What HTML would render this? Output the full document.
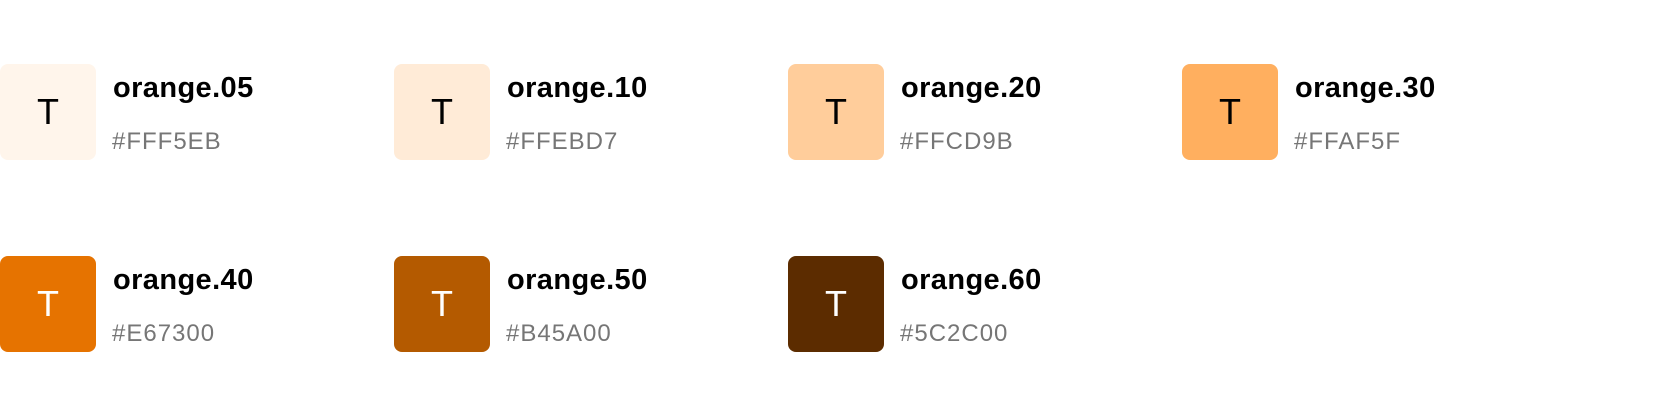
<!DOCTYPE html>
<html><head><style>
body{margin:0;width:1680px;height:416px;background:#fff;font-family:"Liberation Sans",sans-serif;position:relative;overflow:hidden}
.c{position:absolute;width:394px;height:96px}
.s{position:absolute;left:0;top:0;width:96px;height:96px;border-radius:8px;display:flex;align-items:center;justify-content:center;font-size:36px;line-height:1}
.t{position:absolute;left:113px;top:8px;font-size:29px;font-weight:bold;color:#000;white-space:nowrap;letter-spacing:0.4px}
.h{position:absolute;left:112px;top:64px;font-size:24px;color:#767676;white-space:nowrap;letter-spacing:1px}
</style></head><body>
<div class="c" style="left:0;top:64px"><div class="s" style="background:#FFF5EB">T</div><div class="t">orange.05</div><div class="h">#FFF5EB</div></div>
<div class="c" style="left:394px;top:64px"><div class="s" style="background:#FFEBD7">T</div><div class="t">orange.10</div><div class="h">#FFEBD7</div></div>
<div class="c" style="left:788px;top:64px"><div class="s" style="background:#FFCD9B">T</div><div class="t">orange.20</div><div class="h">#FFCD9B</div></div>
<div class="c" style="left:1182px;top:64px"><div class="s" style="background:#FFAF5F">T</div><div class="t">orange.30</div><div class="h">#FFAF5F</div></div>
<div class="c" style="left:0;top:256px"><div class="s" style="background:#E67300;color:#fff">T</div><div class="t">orange.40</div><div class="h">#E67300</div></div>
<div class="c" style="left:394px;top:256px"><div class="s" style="background:#B45A00;color:#fff">T</div><div class="t">orange.50</div><div class="h">#B45A00</div></div>
<div class="c" style="left:788px;top:256px"><div class="s" style="background:#5C2C00;color:#fff">T</div><div class="t">orange.60</div><div class="h">#5C2C00</div></div>
</body></html>
